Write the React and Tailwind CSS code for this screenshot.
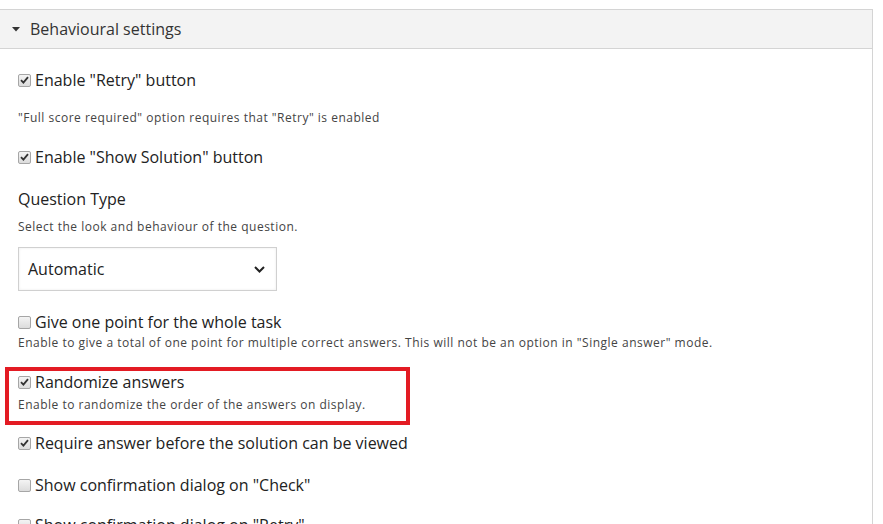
import React from "react";

const font = { fontFamily: '"Open Sans", "Noto Sans", Arial, sans-serif' };

function Box({ checked }) {
  return (
    <span className="relative inline-flex h-[13px] w-[13px] shrink-0 items-center justify-center rounded-[2px] border border-[#a6a6a6] bg-gradient-to-b from-[#f4f4f4] to-[#dcdcdc]">
      {checked && (
        <svg width="9" height="8" viewBox="0 0 9 8" className="block">
          <path d="M1 4.2 L3.4 6.6 L8 1.2" fill="none" stroke="#333" strokeWidth="1.8" />
        </svg>
      )}
    </span>
  );
}

function Check({ checked, label, className = "" }) {
  return (
    <div className={"flex h-[24px] items-center gap-[4px] " + className}>
      <Box checked={checked} />
      <span className="text-[16px] font-normal text-[#222] leading-[24px]">{label}</span>
    </div>
  );
}

function Desc({ children, className = "" }) {
  return (
    <div className={"text-[12px] leading-[18px] text-[#444] tracking-[0.5px] " + className}>{children}</div>
  );
}

export default function App() {
  return (
    <div className="min-h-[524px] w-[883px] overflow-hidden bg-white pt-[9px]" style={font}>
      <div className="w-[873px] border-t border-r border-[#d4d4d4] min-h-[515px]">
        <div className="flex h-[39px] items-center border-b border-[#d4d4d4] bg-[#f3f3f3] pl-[12px]">
          <svg width="8" height="5" viewBox="0 0 8 5" className="mr-[10px]">
            <path d="M0 0 L8 0 L4 4.5 Z" fill="#333" />
          </svg>
          <span className="text-[16px] leading-[20px] text-[#333]">Behavioural settings</span>
        </div>
        <div className="pl-[18px]">
          <Check checked label={'Enable "Retry" button'} className="mt-[19px]" />
          <Desc className="mt-[17px]">"Full score required" option requires that "Retry" is enabled</Desc>
          <Check checked label={'Enable "Show Solution" button'} className="mt-[18px]" />
          <div className="mt-[18px] text-[16px] font-normal leading-[24px] text-[#222]">Question Type</div>
          <Desc className="mt-[7px]">Select the look and behaviour of the question.</Desc>
          <div className="mt-[11px] flex h-[44px] w-[259px] items-center justify-between border border-[#d0d0d0] bg-white pl-[9px] pr-[11px] shadow-[inset_0_0_3px_rgba(0,0,0,0.08)]">
            <span className="text-[16px] text-[#222]">Automatic</span>
            <svg width="11" height="7" viewBox="0 0 11 7">
              <path d="M1 1 L5.5 5.5 L10 1" fill="none" stroke="#222" strokeWidth="2" />
            </svg>
          </div>
          <Check label="Give one point for the whole task" className="mt-[19px]" />
          <Desc>Enable to give a total of one point for multiple correct answers. This will not be an option in "Single answer" mode.</Desc>
          <div className="relative mt-[18px]">
            <div className="pointer-events-none absolute left-[-13px] top-[-3px] h-[58px] w-[405px] border-[4px] border-[#e31b23]" />
            <Check checked label="Randomize answers" />
            <Desc className="mt-[2px]">Enable to randomize the order of the answers on display.</Desc>
          </div>
          <Check checked label="Require answer before the solution can be viewed" className="mt-[17px]" />
          <Check label={'Show confirmation dialog on "Check"'} className="mt-[18px]" />
          <Check label={'Show confirmation dialog on "Retry"'} className="mt-[16px]" />
        </div>
      </div>
    </div>
  );
}
